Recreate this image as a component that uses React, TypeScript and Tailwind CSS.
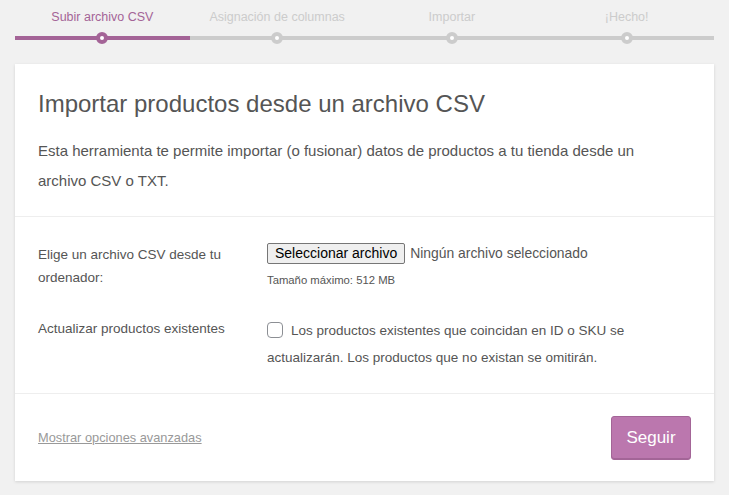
const steps = [
  { label: "Subir archivo CSV", active: true },
  { label: "Asignación de columnas", active: false },
  { label: "Importar", active: false },
  { label: "¡Hecho!", active: false },
];

export default function App() {
  return (
    <div
      className="min-h-[495px] bg-[#f1f1f1] px-[15px] text-[#555]"
      style={{ fontFamily: '"Liberation Sans", Arial, sans-serif' }}
    >
      <ol className="flex pt-[9px]">
        {steps.map((s) => (
          <li
            key={s.label}
            className={`relative flex-1 border-b-4 pb-[10px] text-center text-[12.5px] leading-[17px] ${
              s.active ? "border-[#a46497] text-[#a46497]" : "border-[#ccc] text-[#ccc]"
            }`}
          >
            {s.label}
            <span
              className={`absolute bottom-[-8px] left-1/2 ml-[-6px] h-[12px] w-[12px] rounded-full border-4 bg-white ${
                s.active ? "border-[#a46497]" : "border-[#ccc]"
              }`}
            />
          </li>
        ))}
      </ol>

      <div className="mt-[24px] bg-white shadow-[0_1px_3px_rgba(0,0,0,0.13)]">
        <header className="border-b border-[#eee] px-[23px] pt-[26px] pb-[20px]">
          <h2 className="text-[24px] leading-[28px] text-[#555]">
            Importar productos desde un archivo CSV
          </h2>
          <p className="mt-[18px] max-w-[645px] text-[15px] leading-[30px] text-[#555]">
            Esta herramienta te permite importar (o fusionar) datos de productos a tu tienda desde un archivo CSV o TXT.
          </p>
        </header>

        <section className="border-b border-[#eee] px-[23px] pt-[26px] pb-[22px] text-[13.5px]">
          <div className="flex">
            <label className="w-[229px] shrink-0 pr-[20px] leading-[23px] text-[#555]">
              Elige un archivo CSV desde tu ordenador:
            </label>
            <div>
              <div className="flex items-center">
                <button
                  type="button"
                  className="h-[21px] rounded-[2px] border border-[#767676] bg-[#efefef] px-[7px] text-[14px] leading-[19px] text-black"
                  style={{ fontFamily: "Arial, sans-serif" }}
                >
                  Seleccionar archivo
                </button>
                <span className="ml-[5px] text-[13.9px] text-[#555]">Ningún archivo seleccionado</span>
              </div>
              <small className="mt-[8px] block text-[11.3px] text-[#555]">Tamaño máximo: 512 MB</small>
            </div>
          </div>

          <div className="mt-[28px] flex">
            <label className="w-[229px] shrink-0 pr-[20px] leading-[23px] text-[#555]">
              Actualizar productos existentes
            </label>
            <label className="block leading-[27px] text-[#555]">
              <input
                type="checkbox"
                className="mr-[8px] inline-block h-[16px] w-[16px] translate-y-[3px] appearance-none rounded-[4px] border border-[#8c8f94] bg-white"
              />
              Los productos existentes que coincidan en ID o SKU se actualizarán. Los productos que no existan se omitirán.
            </label>
          </div>
        </section>

        <footer className="flex items-center justify-between px-[23px] pt-[22px] pb-[21px]">
          <a href="#" className="text-[12.8px] text-[#999] underline">
            Mostrar opciones avanzadas
          </a>
          <button
            type="button"
            className="h-[44px] w-[80px] rounded-[3px] border border-[#a36597] bg-[#bb77ae] text-[17px] text-white shadow-[inset_0_-1px_0_#a36597]"
          >
            Seguir
          </button>
        </footer>
      </div>
    </div>
  );
}
